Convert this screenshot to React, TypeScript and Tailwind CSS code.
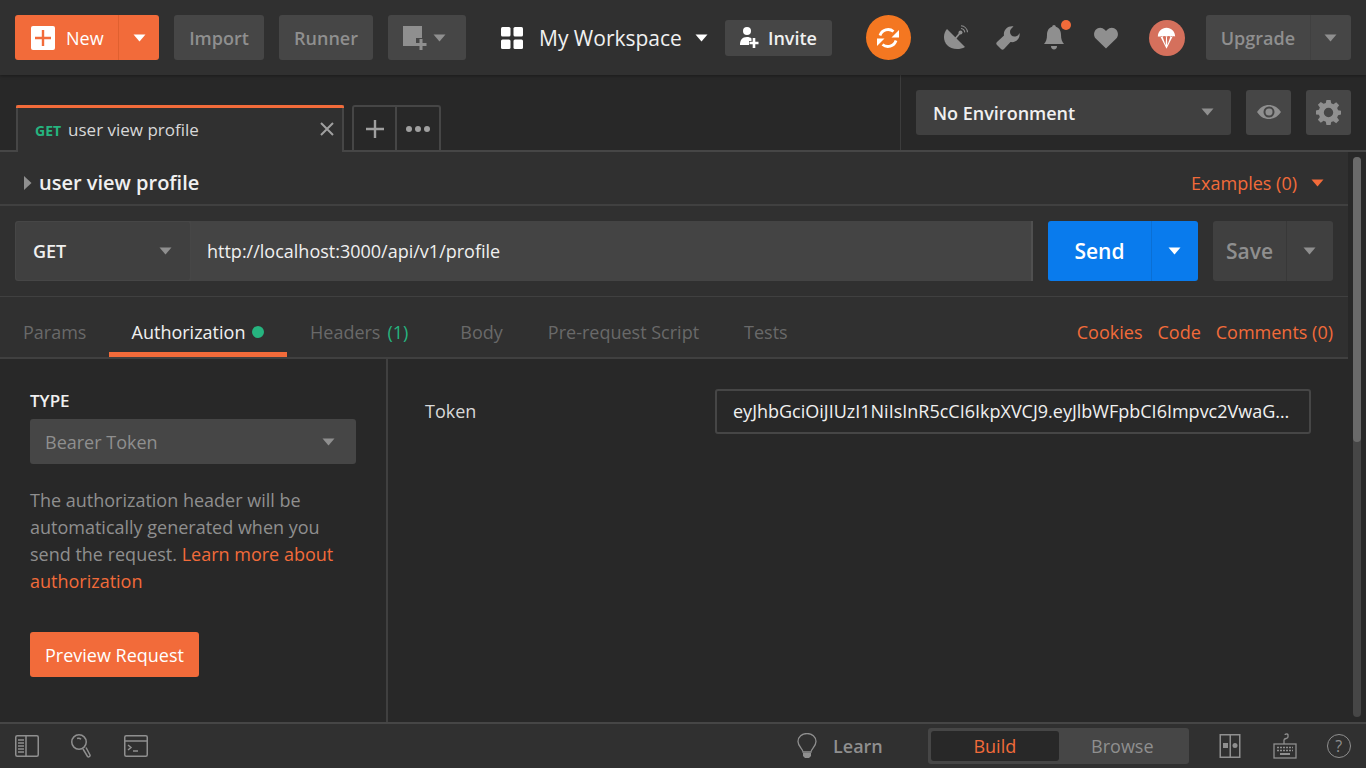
import type { ReactNode } from "react"

function Caret({ className = "" }: { className?: string }) {
  return (
    <svg width="13" height="8" viewBox="0 0 13 8" className={className}>
      <path d="M0.5 0.5h12L6.500 7.500z" fill="currentColor" />
    </svg>
  )
}

function HeaderButton({ children, className = "" }: { children: ReactNode; className?: string }) {
  return (
    <div className={`flex h-[45px] items-center justify-center rounded-[3px] bg-[#464646] text-[#8f8f8f] ${className}`}>
      {children}
    </div>
  )
}

function IconSlot({ children, className = "" }: { children: ReactNode; className?: string }) {
  return <div className={`flex items-center justify-center ${className}`}>{children}</div>
}

export default function App() {
  return (
    <div className="flex h-[768px] w-[1366px] flex-col overflow-hidden bg-[#282828] font-['Open_Sans',sans-serif] text-[18px] text-[#f0f0f0]">
      {/* Top bar */}
      <header className="relative z-10 flex h-[75px] shrink-0 items-center bg-[#303030] pl-[15px] shadow-[0_1px_3px_rgba(0,0,0,0.35)]">
        <div className="flex h-[45px] w-[144px] items-center rounded-[3px] bg-[#f26b3a] text-white">
          <div className="flex h-full w-[104px] items-center border-r border-[#e0602f] pl-4">
            <div className="flex h-6 w-6 items-center justify-center rounded-[2px] bg-white">
              <svg width="18" height="18" viewBox="0 0 18 18">
                <path d="M9 1v16M1 9h16" stroke="#f26b3a" strokeWidth="2.400" />
              </svg>
            </div>
            <span className="ml-[11px] pt-[2px] text-[18px]">New</span>
          </div>
          <div className="flex flex-1 items-center justify-center">
            <Caret />
          </div>
        </div>
        <HeaderButton className="ml-[15px] w-[90px] pt-[2px] text-[18px] font-semibold">Import</HeaderButton>
        <HeaderButton className="ml-[15px] w-[94px] pt-[2px] text-[18px] font-semibold">Runner</HeaderButton>
        <HeaderButton className="ml-[15px] w-[78px] !justify-start gap-[4px] pl-[15px]">
          <svg width="26" height="24" viewBox="0 0 26 24">
            <path d="M0 0h19v12h-6v8H0z" fill="#8f8f8f" />
            <path d="M18 13v11M12.500 18.500h11" stroke="#8f8f8f" strokeWidth="3" />
          </svg>
          <Caret />
        </HeaderButton>

        <IconSlot className="ml-[34px] w-[24px]">
          <svg width="22" height="22" viewBox="0 0 22 22" fill="#fff">
            <rect x="0" y="0" width="9.500" height="9.500" rx="1.500" />
            <rect x="12.500" y="0" width="9.500" height="9.500" rx="1.500" />
            <rect x="0" y="12.500" width="9.500" height="9.500" rx="1.500" />
            <rect x="12.500" y="12.500" width="9.500" height="9.500" rx="1.500" />
          </svg>
        </IconSlot>
        <span className="ml-[15px] pt-[2px] text-[21px] leading-none">My Workspace</span>
        <Caret className="ml-[13px] text-white" />
        <div className="ml-[17px] flex h-9 w-[107px] items-center rounded-[3px] bg-[#464646] pl-[14px] text-[#f0f0f0]">
          <svg width="20" height="21" viewBox="0 0 20 21" fill="#fff">
            <circle cx="8" cy="4" r="4" />
            <path d="M1 18c0-5 2-8 7-8 2 0 3.500.5 4.500 1.500V14H10v4z" />
            <path d="M15 11v10M10.500 16h9" stroke="#fff" strokeWidth="2.600" />
          </svg>
          <span className="ml-[9px] pt-[2px] text-[18px] font-semibold">Invite</span>
        </div>

        <div className="ml-[34px] flex h-[45px] w-[45px] items-center justify-center rounded-full bg-[#f47721]">
          <svg width="24" height="24" viewBox="0 0 24 24" fill="none" stroke="#fff" strokeWidth="2.800">
            <path d="M4 9.500A8.500 8.500 0 0 1 17.500 5.500" />
            <path d="M20 14.500A8.500 8.500 0 0 1 6.500 18.500" />
            <path d="M23 4v7.500h-7.500z" fill="#fff" stroke="none" />
            <path d="M1 20v-7.500h7.500z" fill="#fff" stroke="none" />
          </svg>
        </div>

        <IconSlot className="ml-[33px] w-6">
          <svg width="24" height="25" viewBox="0 0 24 25" fill="#8f8f8f">
            <path d="M3 4C-1 8.500-1 15.500 3 20s12 5.500 18 2z" />
            <path d="M11 14l5-6" stroke="#8f8f8f" strokeWidth="1.800" />
            <circle cx="16.500" cy="7.500" r="2" />
            <path d="M17 3.500c2 .2 3.500 1.700 3.800 3.800M17 .8c3.500.2 6.200 3 6.500 6.500" fill="none" stroke="#8f8f8f" strokeWidth="1.100" />
          </svg>
        </IconSlot>
        <IconSlot className="ml-[28px] w-6">
          <svg width="24" height="24" viewBox="0 0 24 24" fill="#8f8f8f">
            <path d="M23.500 7c1 5.500-3.500 10-9 9L8 23c-1 1-2 1-3 0l-4-4c-1-1-1-2 0-3l7-6.500C7 4 12-.5 17.500.5 15 2.500 14 4 14 6c0 2.500 2 4.500 4.500 4.500 2 0 4-1 5-3.500z" />
          </svg>
        </IconSlot>
        <div className="relative ml-[22px] flex w-6 justify-center">
          <svg width="20" height="25" viewBox="0 0 20 25" fill="#8f8f8f">
            <path d="M10 0c1 0 1.800.8 1.800 1.800C15.500 3 17 6 17 10c0 4 1 7 3 9H0c2-2 3-5 3-9 0-4 1.500-7 5.200-8.200C8.200.8 9 0 10 0z" />
            <path d="M7 21h6c0 2-1.200 3.500-3 3.500S7 23 7 21z" />
          </svg>
          <span className="absolute right-[-5px] top-[-5px] h-[10px] w-[10px] rounded-full bg-[#f26b3a]" />
        </div>
        <IconSlot className="ml-[28px] w-6">
          <svg width="25" height="22" viewBox="0 0 25 22" fill="#8f8f8f">
            <path d="M12.500 22L1.800 11.500C-.5 9-.5 5 1.800 2.300c2.500-2.800 6.800-2.800 9.400 0l1.300 1.400 1.300-1.400c2.600-2.800 6.900-2.800 9.400 0 2.300 2.700 2.300 6.700 0 9.200z" />
          </svg>
        </IconSlot>
        <div className="ml-[31px] flex h-9 w-9 items-center justify-center rounded-full bg-[#d5705c]">
          <svg width="19" height="24" viewBox="0 0 22 27">
            <path d="M1 12C1 5.500 5.500 1.500 11 1.500S21 5.500 21 12c-1-1-2-1-2.500 0-1-1-2-1-2.500 0-1.500-1-3.500-1-5 0-1.500-1-3.500-1-5 0-.5-1-1.500-1-2.500 0C2.500 11.500 2 11.500 1 12z" fill="#fff" />
            <path d="M4 12l7 14 7-14h-2.500L12 22l-.5-10h-1L10 22 6.500 12z" fill="#fff" />
          </svg>
        </div>
        <div className="ml-[21px] flex h-[45px] w-[145px] items-center rounded-[3px] bg-[#464646] text-[#8f8f8f]">
          <div className="flex h-full w-[105px] items-center justify-center border-r border-[#404040] pt-[2px] text-[18px] font-semibold">Upgrade</div>
          <div className="flex flex-1 items-center justify-center">
            <Caret />
          </div>
        </div>
      </header>

      {/* Tab strip and environment */}
      <div className="flex h-[77px] shrink-0 border-b-2 border-[#464646]">
        <div className="flex flex-1 items-end pl-[16px]">
          <div className="relative -mb-[2px] flex h-[47px] w-[328px] items-center border-x-2 border-[#464646] bg-[#303030] pl-[17px] pt-[3px]">
            <span className="absolute -left-[2px] -right-[2px] top-0 h-[3px] rounded-t-[2px] bg-[#f26b3a]" />
            <span className="text-[14px] font-bold text-[#26b47f]">GET</span>
            <span className="ml-[7px] text-[17px] text-[#d8d8d8]">user view profile</span>
            <svg width="16" height="16" viewBox="0 0 16 16" className="absolute right-[7px] top-[16px]">
              <path d="M2 2l12 12M14 2L2 14" stroke="#a0a0a0" strokeWidth="2" />
            </svg>
          </div>
          <div className="ml-[8px] flex h-[45px] w-[89px] rounded-t-[3px] border-x-2 border-t-2 border-[#464646] bg-[#282828]">
            <div className="flex w-[43px] items-center justify-center border-r-2 border-[#464646]">
              <svg width="18" height="18" viewBox="0 0 18 18">
                <path d="M9 0v18M0 9h18" stroke="#a0a0a0" strokeWidth="2.400" />
              </svg>
            </div>
            <div className="flex flex-1 items-center justify-center gap-[3px]">
              <span className="h-[6px] w-[6px] rounded-full bg-[#a0a0a0]" />
              <span className="h-[6px] w-[6px] rounded-full bg-[#a0a0a0]" />
              <span className="h-[6px] w-[6px] rounded-full bg-[#a0a0a0]" />
            </div>
          </div>
        </div>
        <div className="flex w-[466px] items-center border-l border-[#3c3c3c] pb-[1px] pl-[15px]">
          <div className="flex h-[45px] w-[315px] items-center justify-between rounded-[3px] bg-[#404040] pl-[17px] pr-[17px]">
            <span className="pt-[2px] text-[18px] font-semibold text-[#f0f0f0]">No Environment</span>
            <Caret className="text-[#8f8f8f]" />
          </div>
          <div className="ml-[15px] flex h-[45px] w-[45px] items-center justify-center rounded-[3px] bg-[#464646]">
            <svg width="26" height="16" viewBox="0 0 26 16">
              <path d="M1 8c3-4.500 7-7 12-7s9 2.500 12 7c-3 4.500-7 7-12 7S4 12.500 1 8z" fill="#8f8f8f" />
              <circle cx="13" cy="8" r="5.500" fill="#464646" />
              <circle cx="13" cy="8" r="3.500" fill="#8f8f8f" />
            </svg>
          </div>
          <div className="ml-[15px] flex h-[45px] w-[45px] items-center justify-center rounded-[3px] bg-[#464646]">
            <svg width="25" height="25" viewBox="0 0 24 24" fill="#8f8f8f">
              <path fillRule="evenodd" d="M10 0h4l.6 3.200 2.100.9L19.400 2.200l2.800 2.800-1.900 2.700.9 2.100L24 10.400v3.600l-2.800.6-.9 2.100 1.900 2.700-2.800 2.800-2.700-1.900-2.100.9L14 24h-4l-.6-3.200-2.100-.9-2.700 1.900-2.800-2.800 1.900-2.700-.9-2.100L0 14v-4l2.800-.6.900-2.100L1.800 4.600l2.800-2.800 2.700 1.900 2.100-.9zM12 7.500a4.500 4.500 0 1 0 0 9 4.500 4.500 0 0 0 0-9z" />
            </svg>
          </div>
        </div>
      </div>

      {/* Main */}
      <div className="flex min-h-0 flex-1">
        <div className="flex min-w-0 flex-1 flex-col">
          <div className="flex h-[52px] shrink-0 items-center justify-between bg-[#303030] pl-[23px] pr-[24px] pt-[10px]">
            <div className="flex items-center">
              <svg width="9" height="14" viewBox="0 0 9 14">
                <path d="M1 0l7.500 7L1 14z" fill="#8f8f8f" />
              </svg>
              <span className="ml-[7px] text-[20px] font-semibold text-[#f0f0f0]">user view profile</span>
            </div>
            <div className="flex items-center text-[#f26b3a]">
              <span className="text-[18px]">Examples (0)</span>
              <Caret className="ml-[14px]" />
            </div>
          </div>

          <div className="flex h-[93px] shrink-0 items-center border-b border-t-2 border-b-[#404040] border-t-[#404040] bg-[#303030] pl-[15px]">
            <div className="flex h-[60px] w-[1018px] rounded-[3px] bg-[#464646]">
              <div className="m-[1px] flex w-[174px] items-center justify-between rounded-[3px] border-r-2 border-[#404040] bg-[#404040] pl-[17px] pr-[16px]">
                <span className="text-[18px] font-semibold text-[#f0f0f0]">GET</span>
                <Caret className="text-[#8f8f8f]" />
              </div>
              <div className="flex flex-1 items-center border-r-2 border-[#505050] bg-[#444444] pl-[16px] text-[18px] text-[#f0f0f0]">
                http://localhost:3000/api/v1/profile
              </div>
            </div>
            <div className="ml-[15px] flex h-[60px] w-[150px] items-center rounded-[3px] bg-[#097bed] text-white">
              <div className="flex h-full w-[104px] items-center justify-center border-r border-[#0a6fd4] pt-[2px] text-[21px] font-semibold">Send</div>
              <div className="flex flex-1 items-center justify-center pr-[2px]">
                <Caret />
              </div>
            </div>
            <div className="ml-[15px] flex h-[60px] w-[120px] items-center rounded-[3px] bg-[#404040] text-[#8f8f8f]">
              <div className="flex h-full w-[74px] items-center justify-center border-r border-[#383838] pt-[2px] text-[21px] font-semibold">Save</div>
              <div className="flex flex-1 items-center justify-center pr-[2px]">
                <Caret />
              </div>
            </div>
          </div>

          <div className="flex h-[62px] shrink-0 items-stretch justify-between border-b-2 border-[#404040] bg-[#303030] pr-[15px] pt-[10px] text-[18px]">
            <div className="flex items-stretch text-[#696969]">
              <div className="flex w-[109px] items-center pl-[23px]">Params</div>
              <div className="flex w-[178px] items-center justify-center gap-[7px] border-b-[5px] border-[#f26b3a] pt-[5px] text-[#f0f0f0]">
                Authorization
                <span className="h-3 w-3 rounded-full bg-[#26b47f]" />
              </div>
              <div className="ml-[23px] flex items-center">
                Headers<span className="ml-[7px] text-[#26b47f]">(1)</span>
              </div>
              <div className="ml-[52px] flex items-center">Body</div>
              <div className="ml-[45px] flex items-center">Pre-request Script</div>
              <div className="ml-[45px] flex items-center">Tests</div>
            </div>
            <div className="flex items-center gap-[15px] text-[#f26b3a]">
              <span>Cookies</span>
              <span>Code</span>
              <span>Comments (0)</span>
            </div>
          </div>

          <div className="flex min-h-0 flex-1">
            <aside className="flex w-[388px] shrink-0 flex-col border-r-2 border-[#404040] pl-[30px] pr-[30px] pt-[32px]">
              <div className="text-[17px] font-semibold leading-5 text-[#f0f0f0]">TYPE</div>
              <div className="mt-[8px] flex h-[45px] items-center justify-between rounded-[3px] bg-[#464646] pl-[15px] pr-[21px] text-[#8f8f8f]">
                <span className="pt-[2px] text-[18px]">Bearer Token</span>
                <Caret />
              </div>
              <p className="mt-[23px] text-[18px] leading-[27px] text-[#8f8f8f]">
                The authorization header will be automatically generated when you send the request.{" "}
                <span className="text-[#f26b3a]">Learn more about authorization</span>
              </p>
              <div className="mt-[37px] flex h-[45px] w-[169px] items-center justify-center rounded-[3px] bg-[#f26b3a] pt-[2px] text-[18px] text-white">
                Preview Request
              </div>
            </aside>
            <div className="flex min-w-0 flex-1 items-start pl-[37px] pr-[37px] pt-[30px]">
              <span className="mt-[9px] text-[18px] text-[#d8d8d8]">Token</span>
              <div className="ml-auto flex h-[45px] w-[596px] items-center rounded-[3px] border-2 border-[#464646] pl-[16px] text-[18px] text-[#f0f0f0]">
                <span className="truncate pr-[16px]">eyJhbGciOiJIUzI1NiIsInR5cCI6IkpXVCJ9.eyJlbWFpbCI6Impvc2VwaG9AZXhhbXBsZS5jb20ifQ</span>
              </div>
            </div>
          </div>
        </div>

        {/* Scrollbar */}
        <div className="w-[18px] shrink-0 bg-[#282828] pl-[5px] pt-[5px]">
          <div className="h-[560px] w-2 rounded-full bg-[#464646]">
            <div className="h-[285px] w-2 rounded-full bg-[#6a6a6a]" />
          </div>
        </div>
      </div>

      {/* Status bar */}
      <footer className="flex h-[46px] shrink-0 items-center border-t-2 border-[#464646] bg-[#303030] pl-[15px] text-[#8f8f8f]">
        <svg width="24" height="22" viewBox="0 0 24 22" fill="none" stroke="#8f8f8f" strokeWidth="1.500">
          <rect x="0.750" y="0.750" width="22.500" height="20.500" rx="1.500" />
          <path d="M11 1v20M3 5h6M3 8h6M3 11h6M3 14h6M3 17h6" />
        </svg>
        <svg width="20" height="24" viewBox="0 0 20 24" fill="none" stroke="#8f8f8f" strokeWidth="1.500" className="ml-[32px]">
          <circle cx="8" cy="8" r="7.250" />
          <path d="M12 15l4.500 7.500c1 1 3 0 2.500-1.500L15 13.500" />
          <path d="M6 4.500c1.500-.5 3-.2 4 .8" />
        </svg>
        <svg width="24" height="22" viewBox="0 0 24 22" fill="none" stroke="#8f8f8f" strokeWidth="1.500" className="ml-[33px]">
          <rect x="0.750" y="0.750" width="22.500" height="20.500" rx="1.500" />
          <path d="M1 6h22M4 10l3 2.500L4 15M9 16h5" />
        </svg>

        <svg width="20" height="26" viewBox="0 0 20 26" fill="none" stroke="#8f8f8f" strokeWidth="1.300" className="ml-[649px]">
          <path d="M6 19c0-3-5-5.500-5-10.500a9 8 0 0 1 18 0C19 13.500 14 16 14 19z" />
          <path d="M6 20h8v3l-2 2H8l-2-2z" fill="#8f8f8f" stroke="none" />
        </svg>
        <span className="ml-[16px] text-[18px] font-semibold">Learn</span>
        <div className="ml-[45px] flex h-9 w-[261px] items-center rounded-[3px] bg-[#464646] p-[3px]">
          <div className="flex h-[30px] w-[128px] items-center justify-center rounded-[3px] bg-[#282828] text-[18px] text-[#f26b3a]">Build</div>
          <div className="flex flex-1 items-center justify-center text-[18px]">Browse</div>
        </div>
        <svg width="24" height="24" viewBox="0 0 24 24" fill="none" stroke="#8f8f8f" strokeWidth="1.500" className="ml-[30px]">
          <rect x="1.250" y="0.750" width="19.500" height="22.500" />
          <path d="M11.250 1v22" />
          <rect x="4" y="9" width="5" height="5" fill="#8f8f8f" stroke="none" />
          <circle cx="16" cy="11.500" r="2.500" fill="#8f8f8f" stroke="none" />
        </svg>
        <svg width="24" height="26" viewBox="0 0 24 26" fill="none" stroke="#8f8f8f" strokeWidth="1.300" className="ml-[30px]">
          <rect x="1" y="11" width="22" height="14" />
          <path d="M4 14.500h16M4 17.500h16" strokeDasharray="2 1" />
          <path d="M7 21h10" strokeWidth="2" />
          <path d="M11 11V7c0-2 4-1 4-3V2c0-1.500-3-1.500-3 0" />
        </svg>
        <div className="ml-[30px] flex h-[24px] w-[24px] items-center justify-center rounded-full border-[1.5px] border-[#8f8f8f] text-[16px] leading-none">?</div>
      </footer>
    </div>
  )
}
